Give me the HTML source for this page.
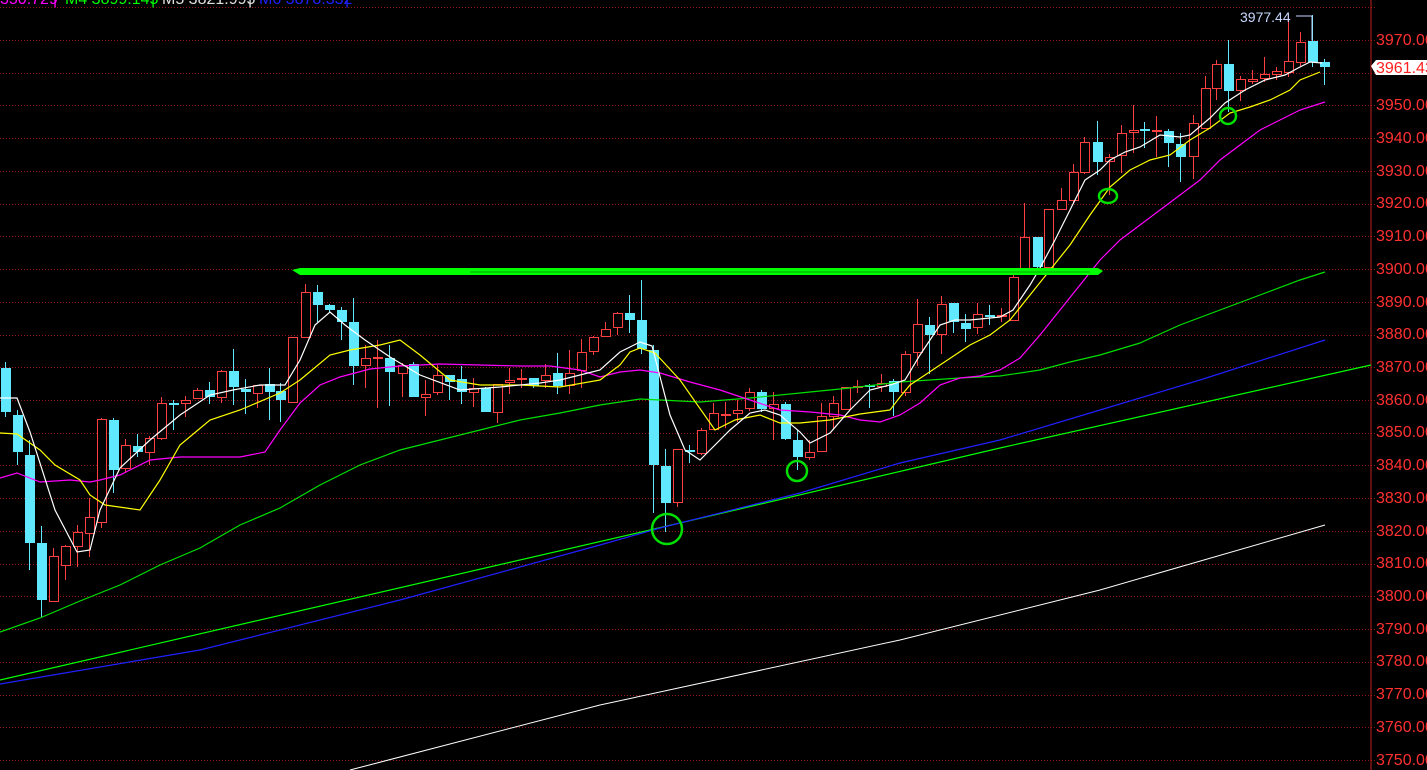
<!DOCTYPE html>
<html><head><meta charset="utf-8"><style>
html,body{margin:0;padding:0;background:#000;overflow:hidden}
svg{display:block}
text{font-family:"Liberation Sans",sans-serif}
</style></head><body>
<svg id="c" width="1427" height="770" viewBox="0 0 1427 770" xmlns="http://www.w3.org/2000/svg">
<rect width="1427" height="770" fill="#000"/>
<g id="grid"></g>
<line x1="1371" y1="0" x2="1371" y2="770" stroke="#c02020" stroke-width="1"/>
<g id="cand"></g>
<g fill="none" stroke-width="1.2">
<polyline stroke="#ffffff" stroke-width="1" points="350,770 600,705 900,640 1100,590 1325,525"/>
<polyline stroke="#00ff00" points="0,680 650,530 1000,448 1371,365"/>
<polyline stroke="#2020ff" points="0,684 200,650 400,600 600,545 660,528 800,493 900,463 1000,440 1100,410 1200,380 1325,340"/>
<polyline stroke="#00e000" points="0,632 40,618 80,601 120,585 160,565 200,548 240,525 280,508 320,485 360,465 400,450 440,440 480,430 520,420 560,413 600,405 640,399 660,400 700,402 750,398 800,393 850,388 900,382 960,378 1000,376 1040,370 1070,362 1100,355 1140,343 1180,325 1220,310 1260,295 1300,280 1325,272"/>
<polyline stroke="#ff00ff" points="0,478 17,473 40,482 70,480 90,482 100,480 120,475 150,460 180,457 210,457 240,457 265,452 280,430 300,403 320,385 340,377 370,369 400,366 440,364 480,365 520,366 550,366 580,370 600,377 620,372 640,370 660,373 690,382 720,390 750,400 780,410 810,412 840,415 860,420 880,422 900,415 920,403 940,385 960,378 980,376 1000,370 1020,358 1040,335 1060,310 1080,285 1100,260 1120,240 1140,225 1160,210 1180,195 1200,180 1220,160 1240,145 1260,130 1280,120 1300,110 1325,102"/>
<polyline stroke="#ffff00" points="0,433 17,434 40,450 55,465 80,480 90,495 105,505 140,510 160,480 180,445 210,420 240,410 280,393 300,380 330,355 350,350 380,345 400,340 420,355 450,380 480,385 520,385 560,387 600,380 620,365 630,352 640,348 655,353 680,380 715,430 735,420 760,415 780,423 800,423 830,420 860,414 890,410 900,397 910,385 940,365 970,345 990,335 1010,320 1030,295 1050,270 1070,245 1090,215 1110,187 1130,170 1150,160 1170,155 1190,140 1210,128 1230,113 1250,107 1270,100 1290,90 1300,80 1320,72"/>
<polyline stroke="#ffffff" points="0,398 17,398 30,432 55,510 77,552 90,550 100,510 120,468 150,440 180,415 210,395 233,390 260,385 285,385 300,360 315,325 330,312 345,325 365,340 390,357 420,375 460,390 500,387 540,383 560,380 580,375 600,370 620,352 640,342 652,346 670,415 685,450 700,460 710,450 730,430 750,413 765,410 780,415 800,432 810,443 830,433 850,410 870,390 890,385 905,380 920,355 940,325 955,320 970,320 1000,317 1013,310 1030,285 1040,268 1055,240 1070,210 1085,180 1100,170 1110,160 1125,152 1140,147 1160,135 1180,137 1190,135 1210,118 1225,103 1245,90 1265,80 1285,75 1300,67 1310,62 1322,63"/>
</g>
<path d="M292,270 L300,268 L1098,268 L1103,271 L1098,275 L300,275 Z" fill="#00ff00"/>
<line x1="470" y1="272" x2="1090" y2="272" stroke="#00a000" stroke-width="1"/>
<g fill="none" stroke="#00e000" stroke-width="2.5">
<circle cx="667" cy="529" r="15"/>
<circle cx="797" cy="471" r="10"/>
<ellipse cx="1108" cy="196" rx="9" ry="7"/>
<circle cx="1228" cy="116" r="8"/>
</g>
<text x="1240" y="22" fill="#c8d8ff" font-size="14">3977.44</text>
<polyline points="1296,16 1312,16 1312,40" fill="none" stroke="#c8d8ff" stroke-width="1"/>
<path d="M1371,66 L1376,60 L1427,60 L1427,75 L1376,75 Z" fill="#ffffff"/>
<text x="1376" y="73" fill="#ff2020" font-size="16">3961.43</text>
<g font-size="16">
<text x="0" y="4" fill="#ff00ff">350.729</text><text x="53" y="4" fill="#ff00ff">|</text>
<text x="65" y="4" fill="#00ff00">M4 3899.145</text><text x="151" y="4" fill="#00ff00">|</text>
<text x="162" y="4" fill="#e0e0e0">M5 3821.995</text><text x="248" y="4" fill="#e0e0e0">|</text>
<text x="259" y="4" fill="#2020ff">M6 3878.332</text><text x="345" y="4" fill="#2020ff">|</text>
</g>
<g fill="#ff3030" font-size="16">
<text x="1376" y="45">3970.00</text>
<text x="1376" y="110">3950.00</text>
<text x="1376" y="143">3940.00</text>
<text x="1376" y="176">3930.00</text>
<text x="1376" y="208">3920.00</text>
<text x="1376" y="241">3910.00</text>
<text x="1376" y="274">3900.00</text>
<text x="1376" y="307">3890.00</text>
<text x="1376" y="339">3880.00</text>
<text x="1376" y="372">3870.00</text>
<text x="1376" y="405">3860.00</text>
<text x="1376" y="437">3850.00</text>
<text x="1376" y="470">3840.00</text>
<text x="1376" y="503">3830.00</text>
<text x="1376" y="536">3820.00</text>
<text x="1376" y="568">3810.00</text>
<text x="1376" y="601">3800.00</text>
<text x="1376" y="634">3790.00</text>
<text x="1376" y="666">3780.00</text>
<text x="1376" y="699">3770.00</text>
<text x="1376" y="732">3760.00</text>
<text x="1376" y="765">3750.00</text>
</g>
</svg>
<script>
var NS="http://www.w3.org/2000/svg";
function el(p,t,a){var e=document.createElementNS(NS,t);for(var k in a)e.setAttribute(k,a[k]);p.appendChild(e);return e;}
var g=document.getElementById("grid");
for(var i=0;i<=23;i++){var y=Math.round(40+(i-1)*32.727)+0.5;el(g,"line",{x1:0,y1:y,x2:1376,y2:y,stroke:"#901515","stroke-dasharray":"1,2"});}
var C=[
[5,362,368,412,417,"c"],[17,410,415,452,465,"c"],[29,440,455,543,570,"c"],[41,526,543,600,617,"c"],[53,548,556,601,601,"r"],[65,545,546,565,580,"r"],[77,525,532,546,567,"r"],[89,498,517,533,557,"r"],[101,418,419,522,528,"r"],[113,418,420,470,493,"c"],[125,439,445,468,473,"r"],[137,434,446,452,457,"c"],[149,436,438,452,465,"r"],[161,397,403,438,440,"r"],[173,400,403,405,430,"c"],[185,396,400,403,417,"r"],[197,388,390,398,398,"r"],[209,382,390,397,404,"c"],[221,370,371,397,403,"r"],[233,349,371,387,405,"c"],[245,379,389,392,414,"c"],[257,385,385,393,408,"r"],[269,368,384,392,420,"c"],[280,383,391,400,422,"c"],[292,337,337,402,403,"r"],[305,284,292,337,337,"r"],[317,285,292,305,322,"c"],[329,304,305,310,312,"c"],[341,307,310,322,340,"c"],[353,298,322,366,385,"c"],[365,345,358,365,388,"r"],[377,340,357,358,408,"r"],[389,345,358,372,406,"c"],[402,363,365,373,397,"r"],[413,362,364,397,397,"c"],[425,380,394,397,416,"r"],[437,365,375,392,395,"r"],[449,375,375,382,400,"c"],[461,366,379,392,404,"c"],[473,378,388,392,407,"r"],[485,387,388,412,412,"c"],[497,384,384,412,423,"r"],[509,368,380,382,394,"r"],[521,369,378,379,388,"r"],[533,378,378,386,388,"c"],[545,364,375,380,388,"r"],[557,353,373,386,394,"c"],[569,350,373,385,394,"r"],[581,339,352,370,388,"r"],[593,336,337,351,355,"r"],[605,322,329,336,337,"r"],[617,312,313,327,335,"r"],[629,295,313,320,333,"c"],[641,280,320,349,354,"c"],[653,345,350,465,513,"c"],[665,449,466,503,532,"c"],[677,449,449,502,507,"r"],[689,445,450,451,463,"c"],[701,428,430,453,455,"r"],[713,403,413,429,430,"r"],[725,402,414,415,428,"r"],[737,400,410,413,422,"r"],[749,388,392,408,411,"r"],[761,390,392,409,412,"c"],[773,392,404,408,440,"r"],[785,402,404,439,440,"c"],[797,430,440,457,470,"c"],[809,440,452,457,460,"r"],[821,403,416,451,452,"r"],[833,396,403,416,430,"r"],[845,388,387,409,409,"r"],[857,380,386,387,393,"r"],[869,384,385,386,408,"c"],[881,374,383,386,392,"r"],[893,379,381,392,416,"c"],[905,351,354,392,396,"r"],[917,299,324,352,366,"r"],[929,317,325,335,374,"c"],[941,296,304,334,354,"r"],[953,303,303,322,333,"c"],[965,314,323,329,342,"c"],[977,303,314,327,334,"r"],[989,305,315,316,325,"c"],[1001,308,315,316,322,"r"],[1013,275,277,320,321,"r"],[1024,203,237,273,273,"r"],[1037,237,237,267,270,"c"],[1048,209,209,267,270,"r"],[1061,188,200,209,210,"r"],[1073,164,172,200,203,"r"],[1084,137,142,172,174,"r"],[1097,121,142,162,175,"c"],[1109,154,157,161,195,"r"],[1121,125,133,155,173,"r"],[1133,105,130,132,153,"r"],[1144,122,129,131,148,"c"],[1156,116,130,131,157,"r"],[1168,129,131,143,167,"c"],[1180,133,144,157,182,"c"],[1193,115,123,156,179,"r"],[1205,76,88,128,128,"r"],[1216,60,64,88,100,"r"],[1228,40,64,91,112,"c"],[1240,76,79,90,101,"r"],[1252,70,79,81,84,"r"],[1264,57,74,78,82,"r"],[1276,67,71,74,80,"r"],[1288,15,61,72,77,"r"],[1300,32,42,62,66,"r"],[1312,15,41,62,67,"c"],[1324,59,62,67,85,"c"]];
var cg=document.getElementById("cand");
C.forEach(function(d){var x=d[0],col=d[5]=="r"?"#ff4040":"#60e8ff";
el(cg,"line",{x1:x+0.5,y1:d[1],x2:x+0.5,y2:d[4],stroke:col,"stroke-width":1});
var h=Math.max(d[3]-d[2],1);
if(d[5]=="r"){el(cg,"rect",{x:x-3.5,y:d[2]+0.5,width:9,height:h,fill:"#000",stroke:col,"stroke-width":1});}
else{el(cg,"rect",{x:x-4,y:d[2],width:10,height:Math.max(h,2),fill:col});}
});
</script>
</body></html>
